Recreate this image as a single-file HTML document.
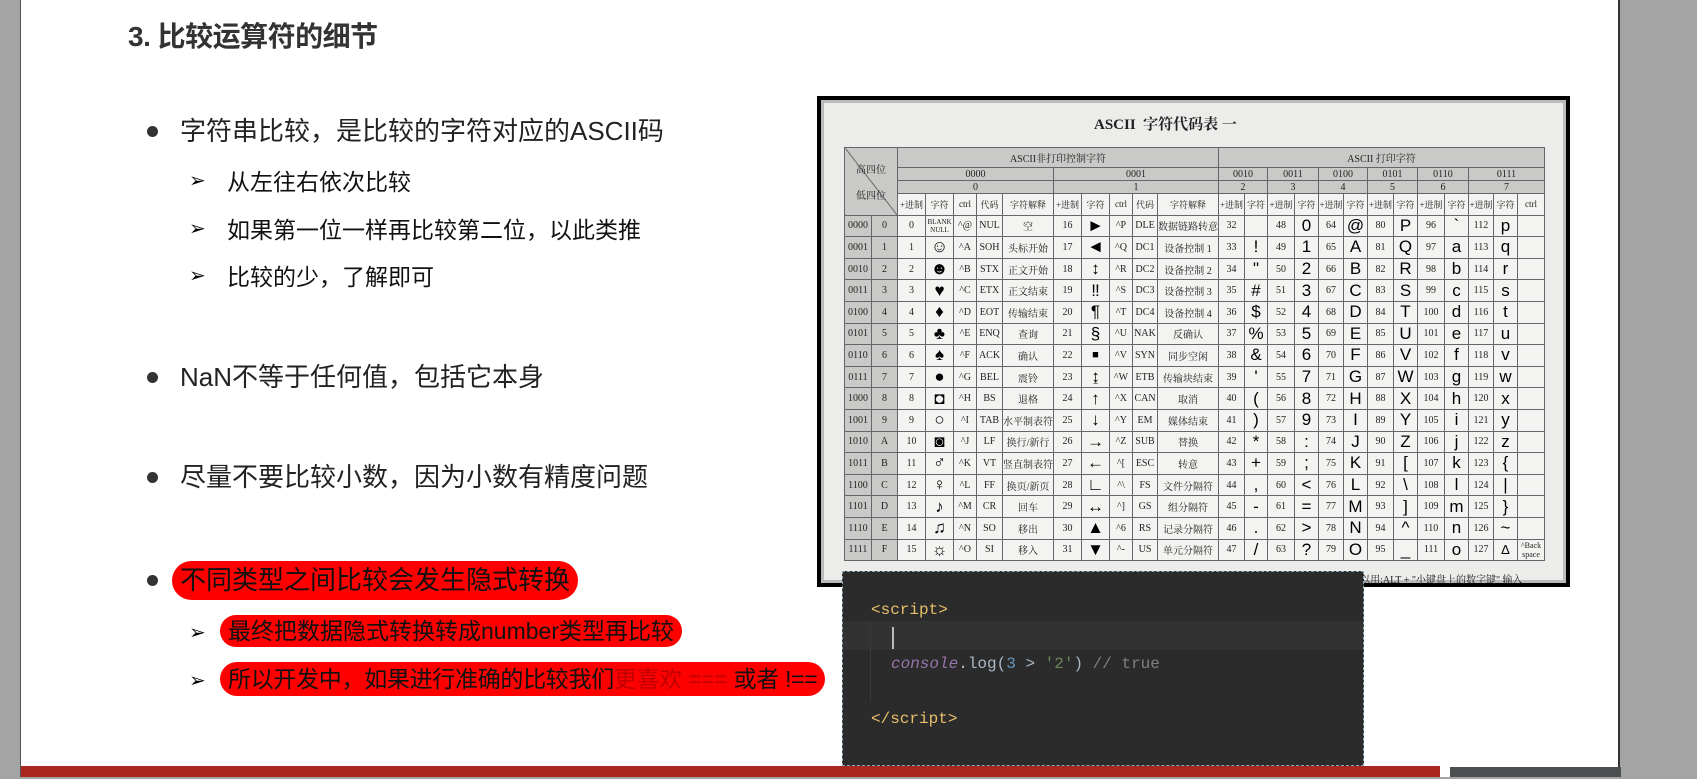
<!DOCTYPE html>
<html><head><meta charset="utf-8"><style>
*{margin:0;padding:0;box-sizing:border-box}
body{width:1697px;height:779px;overflow:hidden;background:#a4a4a4;position:relative;font-family:"Liberation Sans","Noto Sans CJK SC",sans-serif}
.slide{position:absolute;left:20px;top:0;width:1600px;height:777px;background:#fff;border-right:2px solid #333;border-left:1px solid #555}
.abs{position:absolute;white-space:nowrap}
.title{left:107px;top:15px;font-size:28px;font-weight:bold;color:#333;letter-spacing:-0.5px}
.b1{font-size:26px;color:#222}
.dot{position:absolute;width:11px;height:11px;border-radius:50%;background:#333}
.b2{font-size:23px;color:#111}
.arr{font-size:20px;color:#000}
.hl{background:#ff0000;border-radius:20px;padding:0 8px}
.img{position:absolute;left:817px;top:96px;width:753px;height:491px;background:#000;padding:4px}
.img .in{width:100%;height:100%;background:#ececea;border:3px solid #bbb;position:relative}
table{position:absolute;left:20px;top:44px;border-collapse:collapse;table-layout:fixed;font-family:"Liberation Serif","Noto Serif CJK SC",serif;font-size:10px;color:#222}
td{border:1px solid #666;text-align:center;height:21.6px;padding:0;overflow:hidden;white-space:nowrap;background:#f3f3f1}
td.g{background:#c9c9c7}
td.c{font-family:"Liberation Sans","DejaVu Sans",sans-serif;font-size:17px;color:#000}
tr.h td{height:13px;background:#c9c9c7}
.code{position:absolute;left:842px;top:571px;width:522px;height:195px;background:#2b2b2b;border:1px dashed #8ab;font-family:"Liberation Mono",monospace;font-size:16px}
.code div{position:absolute;white-space:pre}
</style></head><body>
<div class="slide">
<div class="abs title">3. 比较运算符的细节</div>
<div class="dot" style="left:126px;top:126px"></div>
<div class="abs b1" style="left:159px;top:111px">字符串比较，是比较的字符对应的ASCII码</div>
<div class="abs arr" style="left:168px;top:168px">➢</div><div class="abs b2" style="left:206px;top:163px">从左往右依次比较</div>
<div class="abs arr" style="left:168px;top:216px">➢</div><div class="abs b2" style="left:206px;top:211px">如果第一位一样再比较第二位，以此类推</div>
<div class="abs arr" style="left:168px;top:263px">➢</div><div class="abs b2" style="left:206px;top:258px">比较的少，了解即可</div>
<div class="dot" style="left:126px;top:372px"></div>
<div class="abs b1" style="left:159px;top:357px">NaN不等于任何值，包括它本身</div>
<div class="dot" style="left:126px;top:472px"></div>
<div class="abs b1" style="left:159px;top:457px">尽量不要比较小数，因为小数有精度问题</div>
<div class="dot" style="left:126px;top:575px"></div>
<div class="abs b1 hl" style="left:151px;top:561px;height:39px;line-height:39px;color:#111">不同类型之间比较会发生隐式转换</div>
<div class="abs arr" style="left:168px;top:620px">➢</div><div class="abs b2 hl" style="left:199px;top:615px;height:32px;line-height:32px">最终把数据隐式转换转成number类型再比较</div>
<div class="abs arr" style="left:168px;top:668px">➢</div><div class="abs b2 hl" style="left:199px;top:662px;height:34px;line-height:34px;letter-spacing:-0.3px">所以开发中，如果进行准确的比较我们<span style="color:#c00000">更喜欢 ===</span> 或者 !==</div>
<div class="abs" style="left:0;top:766px;width:1419px;height:11px;background:#a82820"></div>
<div class="abs" style="left:1429px;top:767px;width:171px;height:10px;background:#4c5050"></div>
</div>

<div class="img"><div class="in">
<div class="abs" style="left:270px;top:10px;font-family:'Liberation Serif','Noto Serif CJK SC',serif;font-size:15px;font-weight:bold;color:#222">ASCII &nbsp;字符代码表 一</div>
<table>
<colgroup><col style="width:27px"><col style="width:26px"><col style="width:28px"><col style="width:28px"><col style="width:23px"><col style="width:26px"><col style="width:51px"><col style="width:28px"><col style="width:28px"><col style="width:23px"><col style="width:25px"><col style="width:60px"><col style="width:26px"><col style="width:23px"><col style="width:27px"><col style="width:24px"><col style="width:25px"><col style="width:24px"><col style="width:26px"><col style="width:24px"><col style="width:27px"><col style="width:24px"><col style="width:25px"><col style="width:24px"><col style="width:27px"></colgroup>
<tr class="h"><td colspan="2" rowspan="4" class="g" style="background:linear-gradient(to top right,#c9c9c7 49%,#555 50%,#c9c9c7 51%)">高四位<br><br>低四位</td><td colspan="10" style="height:20px">ASCII非打印控制字符</td><td colspan="13">ASCII 打印字符</td></tr>
<tr class="h"><td colspan="5">0000</td><td colspan="5">0001</td><td colspan="2">0010</td><td colspan="2">0011</td><td colspan="2">0100</td><td colspan="2">0101</td><td colspan="2">0110</td><td colspan="3">0111</td></tr>
<tr class="h"><td colspan="5">0</td><td colspan="5">1</td><td colspan="2">2</td><td colspan="2">3</td><td colspan="2">4</td><td colspan="2">5</td><td colspan="2">6</td><td colspan="3">7</td></tr>
<tr style="font-size:9px"><td style="height:19px">+进制</td><td>字符</td><td>ctrl</td><td>代码</td><td>字符解释</td><td>+进制</td><td>字符</td><td>ctrl</td><td>代码</td><td>字符解释</td><td>+进制</td><td>字符</td><td>+进制</td><td>字符</td><td>+进制</td><td>字符</td><td>+进制</td><td>字符</td><td>+进制</td><td>字符</td><td>+进制</td><td>字符</td><td>ctrl</td></tr>
<tr><td class="g">0000</td><td class="g">0</td><td>0</td><td style="font-size:7px;line-height:8px">BLANK<br>NULL</td><td>^@</td><td>NUL</td><td>空</td><td>16</td><td class="c">►</td><td>^P</td><td>DLE</td><td>数据链路转意</td><td>32</td><td class="c"></td><td>48</td><td class="c">0</td><td>64</td><td class="c">@</td><td>80</td><td class="c">P</td><td>96</td><td class="c">`</td><td>112</td><td class="c">p</td><td></td></tr>
<tr><td class="g">0001</td><td class="g">1</td><td>1</td><td class="c">☺</td><td>^A</td><td>SOH</td><td>头标开始</td><td>17</td><td class="c">◄</td><td>^Q</td><td>DC1</td><td>设备控制 1</td><td>33</td><td class="c">!</td><td>49</td><td class="c">1</td><td>65</td><td class="c">A</td><td>81</td><td class="c">Q</td><td>97</td><td class="c">a</td><td>113</td><td class="c">q</td><td></td></tr>
<tr><td class="g">0010</td><td class="g">2</td><td>2</td><td class="c">☻</td><td>^B</td><td>STX</td><td>正文开始</td><td>18</td><td class="c">↕</td><td>^R</td><td>DC2</td><td>设备控制 2</td><td>34</td><td class="c">"</td><td>50</td><td class="c">2</td><td>66</td><td class="c">B</td><td>82</td><td class="c">R</td><td>98</td><td class="c">b</td><td>114</td><td class="c">r</td><td></td></tr>
<tr><td class="g">0011</td><td class="g">3</td><td>3</td><td class="c">♥</td><td>^C</td><td>ETX</td><td>正文结束</td><td>19</td><td class="c">‼</td><td>^S</td><td>DC3</td><td>设备控制 3</td><td>35</td><td class="c">#</td><td>51</td><td class="c">3</td><td>67</td><td class="c">C</td><td>83</td><td class="c">S</td><td>99</td><td class="c">c</td><td>115</td><td class="c">s</td><td></td></tr>
<tr><td class="g">0100</td><td class="g">4</td><td>4</td><td class="c">♦</td><td>^D</td><td>EOT</td><td>传输结束</td><td>20</td><td class="c">¶</td><td>^T</td><td>DC4</td><td>设备控制 4</td><td>36</td><td class="c">$</td><td>52</td><td class="c">4</td><td>68</td><td class="c">D</td><td>84</td><td class="c">T</td><td>100</td><td class="c">d</td><td>116</td><td class="c">t</td><td></td></tr>
<tr><td class="g">0101</td><td class="g">5</td><td>5</td><td class="c">♣</td><td>^E</td><td>ENQ</td><td>查询</td><td>21</td><td class="c">§</td><td>^U</td><td>NAK</td><td>反确认</td><td>37</td><td class="c">%</td><td>53</td><td class="c">5</td><td>69</td><td class="c">E</td><td>85</td><td class="c">U</td><td>101</td><td class="c">e</td><td>117</td><td class="c">u</td><td></td></tr>
<tr><td class="g">0110</td><td class="g">6</td><td>6</td><td class="c">♠</td><td>^F</td><td>ACK</td><td>确认</td><td>22</td><td class="c" style="font-size:11px">■</td><td>^V</td><td>SYN</td><td>同步空闲</td><td>38</td><td class="c">&amp;</td><td>54</td><td class="c">6</td><td>70</td><td class="c">F</td><td>86</td><td class="c">V</td><td>102</td><td class="c">f</td><td>118</td><td class="c">v</td><td></td></tr>
<tr><td class="g">0111</td><td class="g">7</td><td>7</td><td class="c">●</td><td>^G</td><td>BEL</td><td>震铃</td><td>23</td><td class="c">↨</td><td>^W</td><td>ETB</td><td>传输块结束</td><td>39</td><td class="c">'</td><td>55</td><td class="c">7</td><td>71</td><td class="c">G</td><td>87</td><td class="c">W</td><td>103</td><td class="c">g</td><td>119</td><td class="c">w</td><td></td></tr>
<tr><td class="g">1000</td><td class="g">8</td><td>8</td><td class="c">◘</td><td>^H</td><td>BS</td><td>退格</td><td>24</td><td class="c">↑</td><td>^X</td><td>CAN</td><td>取消</td><td>40</td><td class="c">(</td><td>56</td><td class="c">8</td><td>72</td><td class="c">H</td><td>88</td><td class="c">X</td><td>104</td><td class="c">h</td><td>120</td><td class="c">x</td><td></td></tr>
<tr><td class="g">1001</td><td class="g">9</td><td>9</td><td class="c">○</td><td>^I</td><td>TAB</td><td>水平制表符</td><td>25</td><td class="c">↓</td><td>^Y</td><td>EM</td><td>媒体结束</td><td>41</td><td class="c">)</td><td>57</td><td class="c">9</td><td>73</td><td class="c">I</td><td>89</td><td class="c">Y</td><td>105</td><td class="c">i</td><td>121</td><td class="c">y</td><td></td></tr>
<tr><td class="g">1010</td><td class="g">A</td><td>10</td><td class="c">◙</td><td>^J</td><td>LF</td><td>换行/新行</td><td>26</td><td class="c">→</td><td>^Z</td><td>SUB</td><td>替换</td><td>42</td><td class="c">*</td><td>58</td><td class="c">:</td><td>74</td><td class="c">J</td><td>90</td><td class="c">Z</td><td>106</td><td class="c">j</td><td>122</td><td class="c">z</td><td></td></tr>
<tr><td class="g">1011</td><td class="g">B</td><td>11</td><td class="c">♂</td><td>^K</td><td>VT</td><td>竖直制表符</td><td>27</td><td class="c">←</td><td>^[</td><td>ESC</td><td>转意</td><td>43</td><td class="c">+</td><td>59</td><td class="c">;</td><td>75</td><td class="c">K</td><td>91</td><td class="c">[</td><td>107</td><td class="c">k</td><td>123</td><td class="c">{</td><td></td></tr>
<tr><td class="g">1100</td><td class="g">C</td><td>12</td><td class="c">♀</td><td>^L</td><td>FF</td><td>换页/新页</td><td>28</td><td class="c">∟</td><td>^\</td><td>FS</td><td>文件分隔符</td><td>44</td><td class="c">,</td><td>60</td><td class="c">&lt;</td><td>76</td><td class="c">L</td><td>92</td><td class="c">\</td><td>108</td><td class="c">l</td><td>124</td><td class="c">|</td><td></td></tr>
<tr><td class="g">1101</td><td class="g">D</td><td>13</td><td class="c">♪</td><td>^M</td><td>CR</td><td>回车</td><td>29</td><td class="c">↔</td><td>^]</td><td>GS</td><td>组分隔符</td><td>45</td><td class="c">-</td><td>61</td><td class="c">=</td><td>77</td><td class="c">M</td><td>93</td><td class="c">]</td><td>109</td><td class="c">m</td><td>125</td><td class="c">}</td><td></td></tr>
<tr><td class="g">1110</td><td class="g">E</td><td>14</td><td class="c">♫</td><td>^N</td><td>SO</td><td>移出</td><td>30</td><td class="c">▲</td><td>^6</td><td>RS</td><td>记录分隔符</td><td>46</td><td class="c">.</td><td>62</td><td class="c">&gt;</td><td>78</td><td class="c">N</td><td>94</td><td class="c">^</td><td>110</td><td class="c">n</td><td>126</td><td class="c">~</td><td></td></tr>
<tr><td class="g">1111</td><td class="g">F</td><td>15</td><td class="c">☼</td><td>^O</td><td>SI</td><td>移入</td><td>31</td><td class="c">▼</td><td>^-</td><td>US</td><td>单元分隔符</td><td>47</td><td class="c">/</td><td>63</td><td class="c">?</td><td>79</td><td class="c">O</td><td>95</td><td class="c">_</td><td>111</td><td class="c">o</td><td>127</td><td class="c" style="font-size:13px">Δ</td><td style="font-size:8px;line-height:9px">^Back<br>space</td></tr>
</table>
<div class="abs" style="left:430px;top:468px;font-family:'Liberation Serif','Noto Serif CJK SC',serif;font-size:10px;color:#222">注：表中的ASCII字符可以用:ALT + "小键盘上的数字键" 输入</div>
</div></div>

<div class="code">
<div style="left:0;top:49px;width:520px;height:29px;background:#323232"></div>
<div style="left:28px;top:29px;color:#e8bf6a">&lt;script&gt;</div>
<div style="left:49px;top:55px;width:2px;height:22px;background:#bbb"></div>
<div style="left:27px;top:50px;width:1px;height:80px;background:#3a3a3a"></div>
<div style="left:48px;top:83px;color:#a9b7c6"><span style="color:#9876aa;font-style:italic">console</span>.log(<span style="color:#6897bb">3</span> &gt; <span style="color:#6a8759">'2'</span>) <span style="color:#808080">// true</span></div>
<div style="left:28px;top:138px;color:#e8bf6a">&lt;/script&gt;</div>
</div>
</body></html>
